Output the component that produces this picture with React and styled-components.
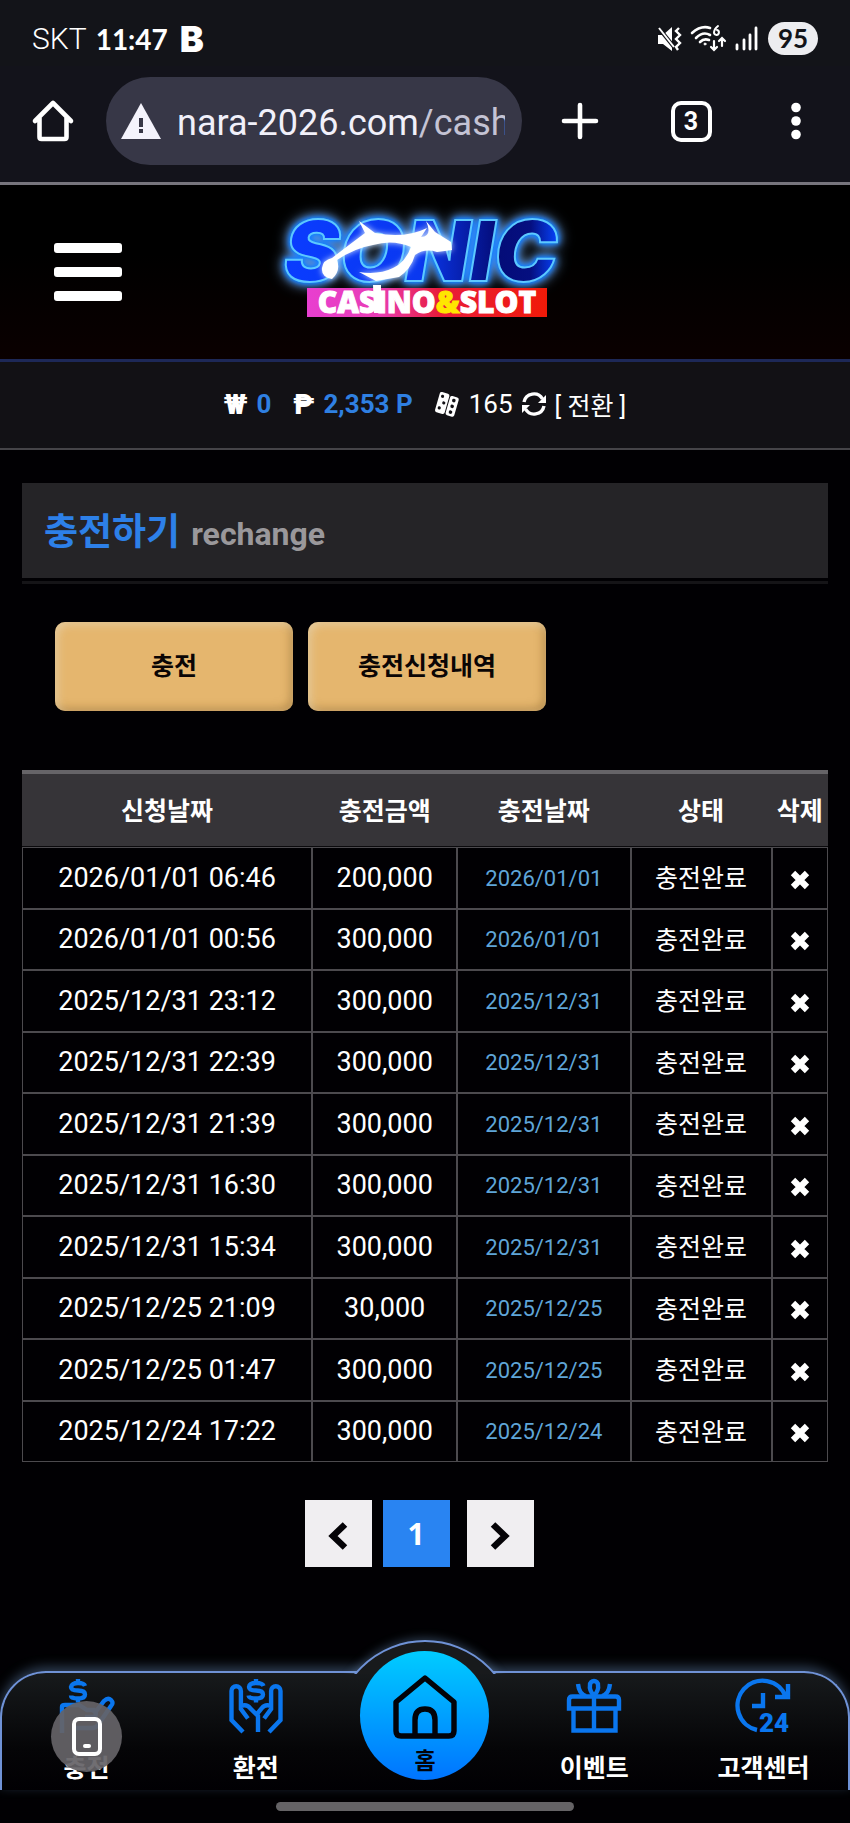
import React from "react";
import styled, { createGlobalStyle } from "styled-components";

const sans = `Roboto, "Noto Sans CJK KR", sans-serif`;
const korean = `"Noto Sans CJK KR", Roboto, sans-serif`;

const GlobalStyle = createGlobalStyle`
  * { box-sizing: border-box; }
  body { margin: 0; background: #010003; color: #fff; font-family: ${sans}; }
  button { border: 0; padding: 0; margin: 0; background: none; color: inherit; font: inherit; cursor: pointer; }
  a { color: inherit; text-decoration: none; }
  svg { display: block; flex: none; overflow: visible; }
`;

const Page = styled.div`
  display: flex;
  flex-direction: column;
  min-height: 100vh;
`;

/* ---------- phone status bar ---------- */
const StatusBar = styled.div`
  display: flex;
  align-items: center;
  height: 66px;
  padding: 11px 32px 0;
  background: #131419;
`;
const Carrier = styled.span`
  font-size: 30px;
  font-weight: 300;
  margin-right: 9px;
`;
const Clock = styled.span`
  font-family: Lato, sans-serif;
  font-size: 28px;
  font-weight: 700;
`;
const AppBadge = styled.span`
  margin-left: 12px;
  font-family: Inter, sans-serif;
  font-size: 36px;
  line-height: 40px;
  font-weight: 900;
`;
const StatusIcons = styled.div`
  display: flex;
  align-items: center;
  gap: 9px;
  margin-left: auto;
`;
const Battery = styled.span`
  width: 50px;
  height: 33px;
  border-radius: 17px;
  background: #ededf0;
  color: #131419;
  font-family: Lato, sans-serif;
  font-size: 26px;
  line-height: 33px;
  font-weight: 700;
  text-align: center;
`;

/* ---------- browser toolbar ---------- */
const Toolbar = styled.div`
  display: flex;
  align-items: center;
  padding: 11px 48px 17px 32px;
  background: #13131b;
  border-bottom: 3px solid #77757d;
`;
const AddressBar = styled.div`
  display: flex;
  align-items: center;
  flex: 1;
  min-width: 0;
  height: 88px;
  margin-left: 32px;
  padding: 0 17px 0 14px;
  border-radius: 44px;
  background: #373747;
`;
const Address = styled.button`
  flex: 1;
  min-width: 0;
  margin-left: 15px;
  && { padding-top: 4px; }
  overflow: hidden;
  white-space: nowrap;
  text-align: left;
  font-size: 36px;
  line-height: 48px;
  color: #f1f0fa;
`;
const AddressPath = styled.span`
  color: #c4c3d4;
`;
const ToolbarActions = styled.div`
  display: flex;
  align-items: center;
  justify-content: space-between;
  width: 240px;
  margin-left: 40px;
`;
const TabCount = styled.button`
  width: 41px;
  height: 41px;
  && { border: 4px solid #fff; margin-right: 6px; }
  border-radius: 10px;
  font-size: 25px;
  line-height: 33px;
  font-weight: 700;
  text-align: center;
`;

/* ---------- site header ---------- */
const SiteHeader = styled.header`
  display: grid;
  grid-template-columns: 1fr auto 1fr;
  align-items: center;
  height: 177px;
  padding: 0 54px;
  background: linear-gradient(#000 40%, #0a0000);
  border-bottom: 3px solid #1d2857;
`;
const MenuButton = styled.button`
  display: flex;
  flex-direction: column;
  gap: 14px;
  width: 68px;
`;
const MenuLine = styled.span`
  height: 10px;
  border-radius: 3px;
  background: #fff;
`;

const AccountBar = styled.section`
  display: flex;
  align-items: center;
  justify-content: center;
  height: 88px;
  padding-bottom: 2px;
  background: #121115;
  border-bottom: 2px solid #454448;
  font-size: 26px;
`;
const Balance = styled.span`
  display: flex;
  align-items: center;
  gap: 9px;
  margin-right: 22px;
`;
const Currency = styled.span`
  font-size: 28px;
  font-weight: 900;
`;
const Amount = styled.span`
  font-weight: 700;
  color: #2f80e2;
`;
const Coupons = styled.span`
  display: flex;
  align-items: center;
  gap: 9px;
`;
const ConvertButton = styled.button`
  font-size: 25px;
`;

/* ---------- main ---------- */
const Main = styled.main`
  flex: 1;
  padding: 33px 22px 104px;
`;
const TitleBar = styled.div`
  display: flex;
  align-items: baseline;
  gap: 11px;
  height: 95px;
  padding: 19px 22px;
  background: #252427;
`;
const Title = styled.h1`
  margin: 0;
  font-family: ${korean};
  font-size: 37px;
  line-height: 54px;
  font-weight: 700;
  color: #2d80e8;
`;
const Subtitle = styled.span`
  font-size: 32px;
  font-weight: 700;
  color: #9a989b;
`;
const TitleRule = styled.div`
  height: 3px;
  margin-top: 3px;
  background: #151417;
`;
const ButtonRow = styled.div`
  display: flex;
  gap: 15px;
  margin: 38px 33px 59px;
`;
const GoldButton = styled.button`
  width: 238px;
  height: 89px;
  && { padding-bottom: 6px; }
  border-radius: 10px;
  background: #e5b66e;
  box-shadow: inset 3px 3px 8px rgba(235, 220, 190, 0.6), inset -3px -3px 8px rgba(150, 110, 50, 0.55);
  && { font-family: ${korean}; font-size: 25px; font-weight: 700; color: #0a0505; }
`;

const HistoryTable = styled.table`
  width: 100%;
  height: 692px;
  table-layout: fixed;
  border-collapse: separate;
  border-spacing: 0;
  border-top: 4px solid #666468;
`;
const HeadCell = styled.th`
  width: ${(p) => p.$width};
  height: 73px;
  padding: 0 0 2px;
  background: #363438;
  border-bottom: 1px solid #0b0a0d;
  font-family: ${korean};
  font-size: 25px;
  font-weight: 700;
  white-space: nowrap;
`;
const Cell = styled.td`
  padding: 0;
  border: 1px solid #4c4a4e;
  text-align: center;
  font-size: 27px;
  line-height: 36px;
`;
const DoneCell = styled(Cell)`
  padding-top: 2px;
  font-size: 22px;
  color: #5fa5d8;
`;
const StateCell = styled(Cell)`
  padding-bottom: 3px;
  font-family: ${korean};
  font-size: 25px;
`;
const DeleteButton = styled.button`
  vertical-align: middle;
`;

const Pagination = styled.nav`
  display: flex;
  justify-content: center;
  margin-top: 38px;
  padding-right: 12px;
`;
const PageButton = styled.button`
  display: flex;
  align-items: center;
  justify-content: center;
  width: 67px;
  height: 67px;
  && {
    margin-right: ${(p) => (p.$current ? "17px" : "11px")};
    padding-top: ${(p) => (p.$current ? "0" : "5px")};
    background: ${(p) => (p.$current ? "#2984f2" : "#f0eef1")};
    color: ${(p) => (p.$current ? "#fff" : "#050307")};
    font-family: "Noto Sans", sans-serif;
    font-size: 30px;
    font-weight: 700;
  }
  &&:last-child { margin-right: 0; }
`;

/* ---------- bottom navigation ---------- */
const BottomNav = styled.nav`
  position: relative;
  display: grid;
  grid-template-columns: repeat(5, 1fr);
  height: 119px;
  border: 2px solid #6f92d6;
  border-bottom: 0;
  border-radius: 46px 46px 0 0;
  background: linear-gradient(#171a1c, #050507 65%, #010003);
  box-shadow: 0 -4px 12px rgba(120, 160, 210, 0.4);
`;
const NavBump = styled.div`
  position: absolute;
  left: calc(50% - 91px);
  top: -33px;
  width: 182px;
  height: 182px;
  border: 2px solid #6f92d6;
  border-radius: 50%;
  background: #181a1c;
  box-shadow: 0 -2px 10px rgba(120, 160, 210, 0.35);
  clip-path: inset(-20px -20px 148px -20px);
`;
const NavItem = styled.a`
  display: flex;
  flex-direction: column;
  align-items: center;
  gap: 15px;
  padding-top: 6px;
  font-family: ${korean};
  font-size: 25px;
  line-height: 36px;
  font-weight: 700;
`;
const HomeSlot = styled.div`
  display: flex;
  justify-content: center;
`;
const HomeButton = styled.a`
  position: relative;
  display: flex;
  flex-direction: column;
  align-items: center;
  flex: none;
  gap: 3px;
  width: 129px;
  height: 129px;
  margin-top: -22px;
  padding-top: 24px;
  border-radius: 50%;
  background: linear-gradient(#00ccff, #0074ff);
  color: #020309;
  font-family: ${korean};
  font-size: 23px;
  line-height: 34px;
  font-weight: 700;
`;
const FloatingButton = styled.button`
  position: absolute;
  left: 49px;
  top: 28px;
  display: flex;
  align-items: center;
  justify-content: center;
  width: 71px;
  height: 71px;
  border-radius: 50%;
  && { background: rgba(101, 99, 103, 0.93); }
`;
const GestureArea = styled.div`
  display: flex;
  justify-content: center;
  height: 33px;
  padding-top: 12px;
`;
const GestureBar = styled.div`
  width: 35%;
  height: 9px;
  border-radius: 5px;
  background: #656366;
`;

const MuteIcon = () => (
  <svg width="25" height="26" viewBox="0 0 25 26" fill="#fff">
    <path d="M1 9h5l9-8v24l-9-7H1z" />
    <path d="M1 1l16 20" stroke="#131419" strokeWidth="4" />
    <path d="M2 2l15 19" stroke="#fff" strokeWidth="2" />
    <path d="M22 2l-3 3 4 4-4 4 4 4-4 4 2 3" fill="none" stroke="#fff" strokeWidth="2.4" />
  </svg>
);
const WifiIcon = () => (
  <svg width="35" height="27" viewBox="0 0 35 27" fill="none" stroke="#fff" strokeWidth="2.6" strokeLinecap="round">
    <path d="M1 8Q10 0 19 3M5 13Q12 6 19 10M9 17Q13 13 18 15" />
    <circle cx="14" cy="19" r="1" fill="#fff" strokeWidth="1" />
    <path d="M27 1Q23 4 23 8a2.500 2.500 0 1 0 3-3" strokeWidth="2" />
    <path d="M23 16v8M20 22l3 3 3-3M31 21v-7M28 16l3-3 3 3" strokeWidth="2.2" />
  </svg>
);
const SignalIcon = () => (
  <svg width="24" height="25" viewBox="0 0 24 25" stroke="#fff" strokeWidth="2.8" strokeLinecap="round">
    <path d="M2 19v4M9 14v9M15 9v14M21 2v21" />
  </svg>
);
const OutlineHome = () => (
  <svg width="42" height="42" viewBox="0 0 42 42" fill="none" stroke="#fff" strokeWidth="4.6" strokeLinejoin="round" strokeLinecap="round">
    <path d="M3 21L21 3l18 18M7.500 18v19q0 2 2 2h23q2 0 2-2V18" />
  </svg>
);
const WarningIcon = () => (
  <svg width="42" height="36" viewBox="0 0 42 36">
    <path d="M21 0L41 36H1z" fill="#f4f3fc" />
    <path d="M21 15v9M21 26v4" stroke="#373747" strokeWidth="4" />
  </svg>
);
const PlusIcon = () => (
  <svg width="36" height="36" viewBox="0 0 36 36" stroke="#fff" strokeWidth="4.6" strokeLinecap="round">
    <path d="M18 2v32M2 18h32" />
  </svg>
);
const DotsIcon = () => (
  <svg width="12" height="38" viewBox="0 0 12 38" fill="#fff">
    <circle cx="6" cy="5.500" r="4.8" />
    <circle cx="6" cy="19" r="4.8" />
    <circle cx="6" cy="32.500" r="4.8" />
  </svg>
);

const LogoWord = styled.text`
  font-family: Inter, sans-serif;
  font-size: 84px;
  font-weight: 900;
  font-style: italic;
  fill: url(#neon);
  stroke: #5cc8ff;
  stroke-width: 2px;
  filter: drop-shadow(0 0 2px #0a86ff) drop-shadow(0 0 3px #0a6cff) drop-shadow(0 0 6px #7fb4f0);
`;
const LogoBanner = styled.text`
  font-family: "Open Sans", sans-serif;
  font-size: 30px;
  font-weight: 800;
  fill: #fff;
  stroke: #fff;
  stroke-width: 1px;
`;

const SonicLogo = () => (
  <svg width="300" height="122" viewBox="0 0 300 122" role="img" aria-label="SONIC CASINO&SLOT">
    <defs>
      <linearGradient id="neon" x1="0" x2="1">
        <stop offset="0" stopColor="#0a3cff" />
        <stop offset="0.5" stopColor="#0a38f0" />
        <stop offset="0.78" stopColor="#040c78" />
        <stop offset="0.9" stopColor="#050f80" />
        <stop offset="1" stopColor="#0644ff" />
      </linearGradient>
      <linearGradient id="banner" x1="0" x2="1">
        <stop offset="0" stopColor="#e83fd0" />
        <stop offset="0.3" stopColor="#e83cb4" />
        <stop offset="0.55" stopColor="#e81c3c" />
        <stop offset="1" stopColor="#f01a08" />
      </linearGradient>
      <filter id="flash" x="-10%" y="-20%" width="120%" height="140%">
        <feDropShadow dx="0" dy="0" stdDeviation="3" floodColor="#cfe4ff" />
      </filter>
    </defs>
    <LogoWord x="9" y="70">SONIC</LogoWord>
    <path
      d="M47 57Q48 49 57 47L74 34L90 22L84 10L100 22Q130 28 152 17L146 26Q158 25 151 10L160 21L176 31L177 39L162 41Q150 37 140 44Q136 58 124 66L101 70L84 61Q104 64 118 57Q130 52 136 36Q118 28 98 34Q80 37 62 49Q66 60 57 68Q46 66 47 57Z"
      fill="#fff"
      filter="url(#flash)"
    />
    <rect x="32" y="77" width="240" height="29" fill="url(#banner)" />
    <path d="M98 74h8v28h-7z" fill="#fff" />
    <LogoBanner x="152" y="102" textAnchor="middle">
      CASINO<tspan fill="#ffe600" stroke="#ffe600">&amp;</tspan>SLOT
    </LogoBanner>
  </svg>
);

const DiceIcon = () => (
  <svg width="25" height="25" viewBox="0 0 25 25">
    <g transform="rotate(16 12.5 12.5)">
      <rect x="2" y="2" width="10" height="21" rx="2" fill="#fff" />
      <rect x="13" y="3" width="9" height="20" rx="2" fill="#fff" />
      <g fill="#121115">
        <circle cx="5.500" cy="6" r="1.6" /><circle cx="8.500" cy="12" r="1.6" /><circle cx="5.500" cy="18" r="1.6" />
        <circle cx="17.500" cy="7" r="1.8" /><circle cx="17.500" cy="13" r="1.8" /><circle cx="17.500" cy="19" r="1.8" />
      </g>
    </g>
  </svg>
);
const RefreshIcon = () => (
  <svg width="24" height="24" viewBox="0 0 24 24" fill="none" stroke="#fff" strokeWidth="3.4">
    <path d="M2 10A10 10 0 0 1 20.500 7M22 14A10 10 0 0 1 3.500 17" />
    <path d="M24 3v8h-8zM0 21v-8h8z" fill="#fff" stroke="none" />
  </svg>
);
const CrossIcon = () => (
  <svg width="20" height="20" viewBox="0 0 20 20" stroke="#fff" strokeWidth="6.2">
    <path d="M3 3l14 14M17 3L3 17" />
  </svg>
);
const Chevron = ({ right }) => (
  <svg width="20" height="30" viewBox="0 0 20 30" fill="none" stroke="currentColor" strokeWidth="6.5">
    <path d={right ? "M3 3.500L15 15 3 26.500" : "M17 3.500L5 15l12 11.500"} />
  </svg>
);

const NavSvg = ({ children }) => (
  <svg width="54" height="54" viewBox="0 0 54 54" fill="none" stroke="#0a76ee" strokeWidth="4.4">
    {children}
  </svg>
);
const DepositIcon = () => (
  <NavSvg>
    <path d="M25 7q-1-3-7-3t-7 4q0 3.500 7 3.500t7 4q0 4-7 4t-7-3M18 0v4M18 19.500v4" />
    <path d="M2 54V28q0-2 3-2h14l8 5h7q4 4 0 7h-9M34 35l10-13q4-4 7-1t0 6L38 46q-2 3-6 3H14" />
  </NavSvg>
);
const WithdrawIcon = () => (
  <NavSvg>
    <path d="M34.500 7q-1-3-7.500-3t-7 4q0 3.500 7 3.500t7 4q0 4-7 4t-7.500-3M27 0v4M27 19.500v4" />
    <path d="M14 53L2.500 41V12a4.700 4.700 0 0 1 9.400 0v18l7 9.500M12 27q6-2 9 2l8 8V53" />
    <path d="M40 53l11.500-12V12a4.700 4.700 0 0 0-9.400 0v18l-7 9.500M42 27q-6-2-9 2l-5 6" />
  </NavSvg>
);
const GiftIcon = () => (
  <NavSvg>
    <path d="M2 29.500V21q0-3.500 3.500-3.500h43q3.500 0 3.500 3.500v8.500zM6.500 29.500h42v22h-42zM27 17v34" />
    <path d="M27 17q-5-6-4-11a4 4 0 0 1 8 0q1 5-4 11zM11 5q1 10 8 12M43 5q-1 10-8 12" />
  </NavSvg>
);
const SupportIcon = () => (
  <NavSvg>
    <path d="M21 51A25 25 0 1 1 50 18M52 5v13H39M27 14v13H16" />
    <text x="23" y="53" fill="#0a76ee" stroke="none" fontFamily="Roboto, sans-serif" fontSize="26" fontWeight="900">24</text>
  </NavSvg>
);
const BigHomeIcon = () => (
  <svg width="64" height="64" viewBox="0 0 64 64" fill="none" stroke="#020309" strokeWidth="5.4" strokeLinejoin="round">
    <path d="M3 27L32 3l29 24v29q0 5-5 5H8q-5 0-5-5z" />
    <path d="M22 61V45q0-11 10-11t10 11v16" />
  </svg>
);
const PhoneIcon = () => (
  <svg width="30" height="40" viewBox="0 0 30 40" fill="none" stroke="#fff" strokeWidth="4" strokeLinecap="round">
    <rect x="2" y="2" width="26" height="35" rx="5" />
    <path d="M13 29h4" />
  </svg>
);

const columns = [
  ["신청날짜", "36%"],
  ["충전금액", "18%"],
  ["충전날짜", "21.5%"],
  ["상태", "17.5%"],
  ["삭제", "7%"],
];
const deposits = [
  ["2026/01/01", "06:46", "200,000"],
  ["2026/01/01", "00:56", "300,000"],
  ["2025/12/31", "23:12", "300,000"],
  ["2025/12/31", "22:39", "300,000"],
  ["2025/12/31", "21:39", "300,000"],
  ["2025/12/31", "16:30", "300,000"],
  ["2025/12/31", "15:34", "300,000"],
  ["2025/12/25", "21:09", "30,000"],
  ["2025/12/25", "01:47", "300,000"],
  ["2025/12/24", "17:22", "300,000"],
];

export default function App() {
  return (
    <Page>
      <GlobalStyle />
      <StatusBar>
        <Carrier>SKT</Carrier>
        <Clock>11:47</Clock>
        <AppBadge>B</AppBadge>
        <StatusIcons>
          <MuteIcon />
          <WifiIcon />
          <SignalIcon />
          <Battery>95</Battery>
        </StatusIcons>
      </StatusBar>
      <Toolbar>
        <button aria-label="Home"><OutlineHome /></button>
        <AddressBar>
          <WarningIcon />
          <Address>nara-2026.com<AddressPath>/cash</AddressPath></Address>
        </AddressBar>
        <ToolbarActions>
          <button aria-label="New tab"><PlusIcon /></button>
          <TabCount>3</TabCount>
          <button aria-label="More"><DotsIcon /></button>
        </ToolbarActions>
      </Toolbar>

      <SiteHeader>
        <MenuButton aria-label="메뉴"><MenuLine /><MenuLine /><MenuLine /></MenuButton>
        <a href="#top"><SonicLogo /></a>
      </SiteHeader>
      <AccountBar>
        <Balance><Currency>₩</Currency><Amount>0</Amount></Balance>
        <Balance><Currency>₱</Currency><Amount>2,353 P</Amount></Balance>
        <Coupons>
          <DiceIcon />
          <span>165</span>
          <RefreshIcon />
          <ConvertButton>[ 전환 ]</ConvertButton>
        </Coupons>
      </AccountBar>

      <Main>
        <TitleBar>
          <Title>충전하기</Title>
          <Subtitle>rechange</Subtitle>
        </TitleBar>
        <TitleRule />
        <ButtonRow>
          <GoldButton>충전</GoldButton>
          <GoldButton>충전신청내역</GoldButton>
        </ButtonRow>
        <HistoryTable>
          <thead>
            <tr>
              {columns.map(([label, width]) => (
                <HeadCell key={label} $width={width}>{label}</HeadCell>
              ))}
            </tr>
          </thead>
          <tbody>
            {deposits.map(([date, time, amount]) => (
              <tr key={date + time}>
                <Cell>{date} {time}</Cell>
                <Cell>{amount}</Cell>
                <DoneCell>{date}</DoneCell>
                <StateCell>충전완료</StateCell>
                <Cell><DeleteButton aria-label="삭제"><CrossIcon /></DeleteButton></Cell>
              </tr>
            ))}
          </tbody>
        </HistoryTable>
        <Pagination>
          <PageButton aria-label="이전"><Chevron /></PageButton>
          <PageButton $current>1</PageButton>
          <PageButton aria-label="다음"><Chevron right /></PageButton>
        </Pagination>
      </Main>

      <BottomNav>
        <NavBump />
        <NavItem href="#deposit"><DepositIcon />충전</NavItem>
        <NavItem href="#withdraw"><WithdrawIcon />환전</NavItem>
        <HomeSlot>
          <HomeButton href="#home"><BigHomeIcon />홈</HomeButton>
        </HomeSlot>
        <NavItem href="#event"><GiftIcon />이벤트</NavItem>
        <NavItem href="#support"><SupportIcon />고객센터</NavItem>
        <FloatingButton aria-label="화면"><PhoneIcon /></FloatingButton>
      </BottomNav>
      <GestureArea><GestureBar /></GestureArea>
    </Page>
  );
}
